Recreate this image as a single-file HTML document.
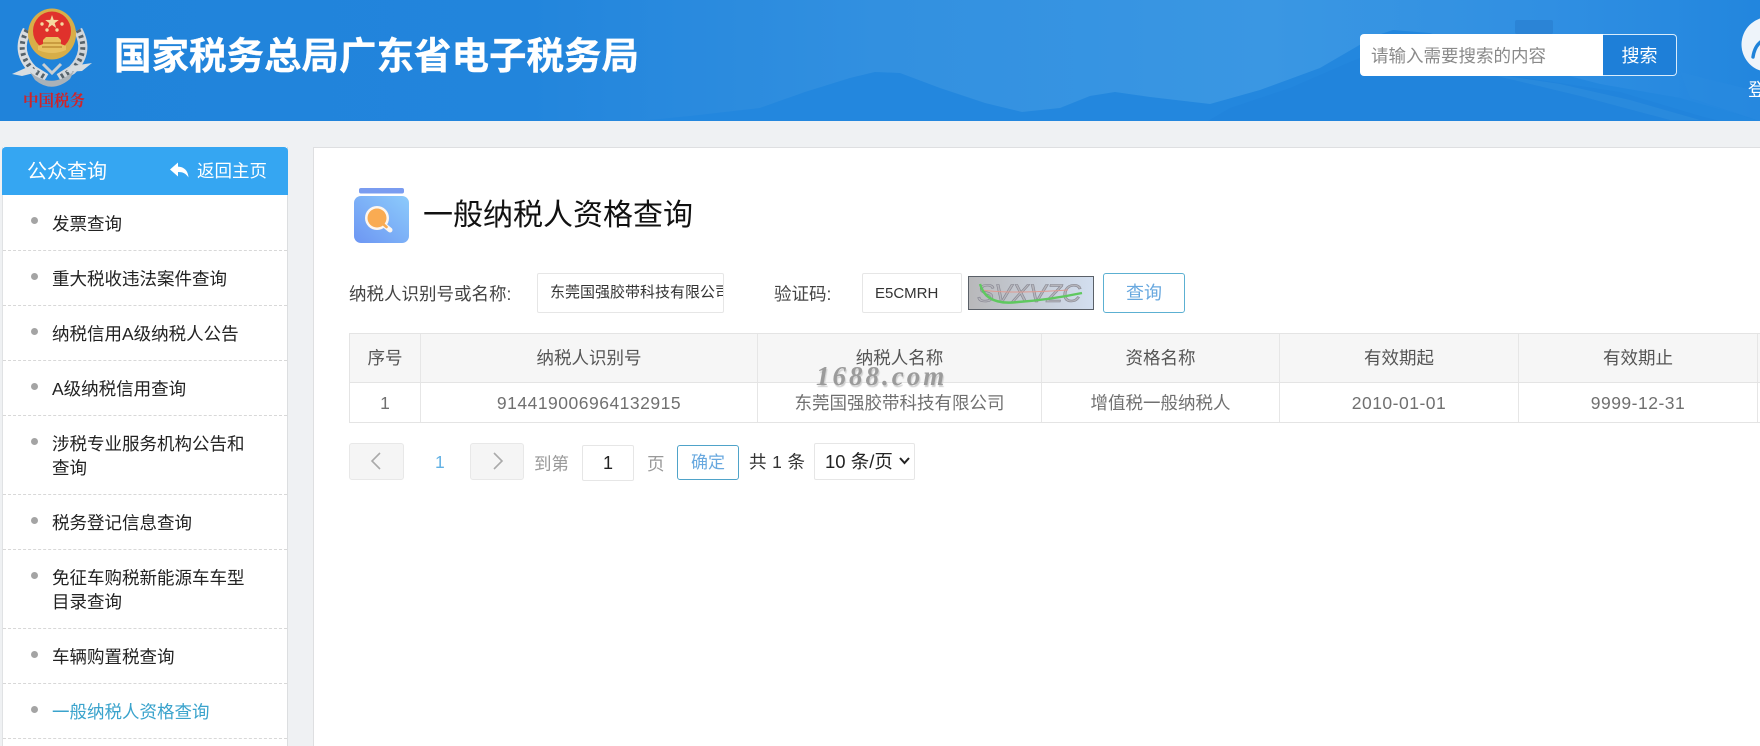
<!DOCTYPE html>
<html lang="zh">
<head>
<meta charset="utf-8">
<title>一般纳税人资格查询</title>
<style>
*{box-sizing:border-box;margin:0;padding:0}
html,body{width:1760px;height:746px;overflow:hidden;background:#eff1f3}
body{position:relative;font-family:"Liberation Sans","Noto Sans CJK SC",sans-serif;font-size:17.5px;color:#333}
.a{position:absolute;white-space:nowrap}
#hd{left:0;top:0;width:1760px;height:121px;overflow:hidden;background:#2083dc}
#title{left:114px;top:32px;font-size:37.5px;line-height:48px;font-weight:700;color:#fff;-webkit-text-stroke:.3px #fff}
#sb{left:2px;top:147px;width:286px;height:599px;background:#fff;border-left:1px solid #e0e2e4;border-right:1px solid #dcdee0}
#sbh{left:2px;top:147px;width:286px;height:48px;background:#35a6f2;border-radius:4px 4px 0 0;color:#fff}
.it{left:3px;width:284px;border-bottom:1px dashed #d8d8d8;padding:16px 30px 0 49px;line-height:24px;font-size:17.5px;color:#222;white-space:normal}
.it:before{content:"";position:absolute;left:28px;top:22px;width:7px;height:7px;border-radius:50%;background:#a4a4a4}
#main{left:313px;top:147px;width:1447px;height:599px;background:#fff;border-top:1px solid #dedfe1;border-left:1px solid #dedfe1}
.box{background:#fff;border:1px solid #e6e6e6;border-radius:2px}
.th,.td{position:absolute;text-align:center;white-space:nowrap;border-right:1px solid #e6e6e6}
.th{top:334px;height:48px;line-height:49px;background:#f6f6f6;color:#555}
.td{top:383px;height:39px;line-height:40px;color:#707070}
.num{letter-spacing:.5px}
.pg{background:#f5f5f5;border:1px solid #e8e8e8;border-radius:3px}
</style>
</head>
<body>
<div class="a" id="hd">
<svg width="1760" height="121" style="position:absolute;left:0;top:0" viewBox="0 0 1760 121">
<defs>
<linearGradient id="sky" x1="0" y1="0" x2="1" y2="0"><stop offset="0" stop-color="#2083da"/><stop offset=".3" stop-color="#2285dc"/><stop offset=".5" stop-color="#3290e0"/><stop offset=".72" stop-color="#3a97e3"/><stop offset=".88" stop-color="#308fe2"/><stop offset="1" stop-color="#2286de"/></linearGradient>
</defs>
<rect width="1760" height="121" fill="url(#sky)"/>
<path d="M640 121 L690 116 L760 108 L805 92 L850 78 L875 72 L900 73 L940 88 L985 103 L1022 112 L1060 108 L1090 96 L1115 92 L1150 97 L1210 104 L1260 90 L1320 68 L1375 36 L1393 30 L1430 33 L1500 58 L1600 84 L1680 98 L1760 121 Z" fill="#2387de"/>
<path d="M1208 121 L1230 108 L1290 88 L1350 62 L1400 42 L1500 74 L1620 92 L1700 116 L1720 121 Z" fill="#2184dc"/>
<path d="M1480 72 L1560 84 L1630 100 L1700 120 L1670 120 L1580 96 Z" fill="#4a9fe4" opacity=".22"/>
<path d="M1680 72 L1760 92 L1760 121 L1690 98 Z" fill="#2a8ae0" opacity=".6"/>
<rect x="1515" y="20" width="38" height="14" rx="2" fill="#2b84d6"/>
<!-- emblem -->
<path d="M27 30 Q15 52 33 70 L46 78" fill="none" stroke="#d9dde0" stroke-width="9"/>
<path d="M78 30 Q90 52 72 70 L59 78" fill="none" stroke="#d2d6da" stroke-width="9"/>
<path d="M27 30 Q15 52 33 70 L46 78" fill="none" stroke="#56636b" stroke-width="5" stroke-dasharray="2.6 3.4"/>
<path d="M78 30 Q90 52 72 70 L59 78" fill="none" stroke="#56636b" stroke-width="5" stroke-dasharray="2.6 3.4"/>
<ellipse cx="52" cy="34" rx="24" ry="25.5" fill="#d8ae48"/>
<ellipse cx="52" cy="31" rx="19" ry="19.5" fill="#e0312c"/>
<path d="M52 15l1.7 4.9 5.1.1-4.1 3.1 1.5 4.9-4.2-3-4.2 3 1.5-4.9-4.1-3.1 5.1-.1z" fill="#f5d9a0"/>
<circle cx="42" cy="24" r="1.7" fill="#f5d9a0"/><circle cx="62" cy="24" r="1.7" fill="#f5d9a0"/><circle cx="47" cy="30" r="1.7" fill="#f5d9a0"/><circle cx="57" cy="30" r="1.7" fill="#f5d9a0"/>
<path d="M38 50 L38 46 L43 44 L43 40 L46 37 L58 37 L61 40 L61 44 L66 46 L66 50 Q52 56 38 50Z" fill="#e8c160"/>
<path d="M43 43h18M42 47h20" stroke="#b8862c" stroke-width="1.2"/>
<path d="M12 74 L30 66 L38 72 L22 76Z" fill="#d8dde0"/>
<path d="M92 63 L72 66 L66 72 L82 71Z" fill="#d8dde0"/>
<path d="M30 72 Q52 90 74 71 L70 79 Q52 94 35 80Z" fill="#aab2b8"/>
<path d="M43 64 L52 73 L61 64" fill="none" stroke="#c9ced2" stroke-width="3"/>
<text x="23" y="106" font-family="'Noto Serif CJK SC',serif" font-size="16" font-weight="700" fill="#cf2429" textLength="62" lengthAdjust="spacingAndGlyphs">中国税务</text>
</svg>
<div class="a" id="title">国家税务总局广东省电子税务局</div>
<div class="a" style="left:1360px;top:34px;width:243px;height:42px;background:#fff;border-radius:4px 0 0 4px;color:#8a8a8a;line-height:45px;padding-left:11px;font-size:17.5px">请输入需要搜索的内容</div>
<div class="a" style="left:1603px;top:34px;width:74px;height:42px;background:#1e7fd8;border:1px solid #d9ecfb;border-left:0;border-radius:0 4px 4px 0;color:#fff;line-height:42px;text-align:center;font-size:18px">搜索</div>
<svg class="a" style="left:1741px;top:17px" width="19" height="55" viewBox="0 0 19 55"><circle cx="28" cy="27.5" r="27.5" fill="#eef4fa"/><path d="M12 40 Q14 26 25 22" fill="none" stroke="#2083d9" stroke-width="3.4" stroke-linecap="round"/><circle cx="26" cy="13" r="5" fill="#c6dcf0"/></svg>
<div class="a" style="left:1748px;top:79px;font-size:18px;line-height:22px;color:#fff">登录</div>
</div>

<div class="a" id="sb"></div>
<div class="a" id="sbh">
<span class="a" style="left:25px;top:12px;font-size:20px;line-height:26px">公众查询</span>
<svg class="a" style="left:168px;top:15px" width="19" height="17" viewBox="0 0 19 17"><path d="M0 7.5 L8 0.5 V4.6 C14 4.8 18 8.5 18.5 15.5 C16 11.5 13 10 8 10 V14.5 Z" fill="#fff"/></svg>
<span class="a" style="left:195px;top:12px;font-size:17.5px;line-height:24px">返回主页</span>
</div>
<div class="a it" style="top:195px;height:56px;padding-top:17px">发票查询</div>
<div class="a it" style="top:251px;height:55px">重大税收违法案件查询</div>
<div class="a it" style="top:306px;height:55px">纳税信用A级纳税人公告</div>
<div class="a it" style="top:361px;height:55px">A级纳税信用查询</div>
<div class="a it" style="top:416px;height:79px">涉税专业服务机构公告和查询</div>
<div class="a it" style="top:495px;height:55px">税务登记信息查询</div>
<div class="a it" style="top:550px;height:79px">免征车购税新能源车车型目录查询</div>
<div class="a it" style="top:629px;height:55px">车辆购置税查询</div>
<div class="a it" style="top:684px;height:55px;color:#3aa3cc">一般纳税人资格查询</div>

<div class="a" id="main"></div>
<svg class="a" style="left:352px;top:186px" width="58" height="60" viewBox="0 0 58 60">
<defs><linearGradient id="jar" x1="0" y1="1" x2="1" y2="0"><stop offset="0" stop-color="#6d96f3"/><stop offset="1" stop-color="#8ccbfb"/></linearGradient></defs>
<rect x="7" y="2" width="45" height="5.5" rx="2" fill="#7a9cf0"/>
<rect x="2" y="10" width="55" height="47" rx="7" fill="url(#jar)"/>
<circle cx="25" cy="32" r="12" fill="#fdf6ef"/>
<path d="M32 39 L38 44" stroke="#fdf6ef" stroke-width="5" stroke-linecap="round"/>
<circle cx="25" cy="32" r="9.5" fill="#f9ab52"/>
<path d="M31 38 L34.5 41" stroke="#f9ab52" stroke-width="2.6" stroke-linecap="round"/>
</svg>
<div class="a" style="left:423px;top:196px;font-size:30px;line-height:40px;color:#111">一般纳税人资格查询</div>

<div class="a" style="left:349px;top:282px;line-height:24px;color:#444;font-size:17.5px">纳税人识别号或名称:</div>
<div class="a box" style="left:537px;top:273px;width:187px;height:40px;overflow:hidden;font-size:15px;line-height:38px;color:#333;padding-left:12px">东莞国强胶带科技有限公司</div>
<div class="a" style="left:774px;top:282px;line-height:24px;color:#444;font-size:17.5px">验证码:</div>
<div class="a box" style="left:862px;top:273px;width:100px;height:40px;font-size:15px;line-height:40px;color:#333;padding-left:12px">E5CMRH</div>
<svg class="a" style="left:968px;top:276px" width="126" height="34" viewBox="0 0 126 34">
<defs><linearGradient id="cp" x1="0" y1="0" x2="1" y2="0"><stop offset="0" stop-color="#b8b8ba"/><stop offset="1" stop-color="#d3dff0"/></linearGradient></defs>
<rect x=".5" y=".5" width="125" height="33" fill="url(#cp)" stroke="#5a6068"/>
<text x="9" y="26" font-family="'Liberation Sans',sans-serif" font-size="25" font-style="italic" fill="#b5b5bb" stroke="#858590" stroke-width=".6" textLength="104" lengthAdjust="spacingAndGlyphs">SVXVZC</text>
<path d="M14 14 Q40 18 100 14" fill="none" stroke="#e09a90" stroke-width="1"/>
<path d="M12 8 Q18 30 50 26 Q80 24 114 17" fill="none" stroke="#5fc85f" stroke-width="2.4"/>
</svg>
<div class="a" style="left:1103px;top:273px;width:82px;height:40px;border:1px solid #5cb0d2;border-radius:3px;background:#fff;color:#68a8df;font-size:18px;line-height:39px;text-align:center">查询</div>

<div class="a" style="left:349px;top:333px;width:1411px;height:90px;border:1px solid #e4e4e4;border-right:0"></div>
<div class="th" style="left:350px;width:71px">序号</div>
<div class="th" style="left:421px;width:337px">纳税人识别号</div>
<div class="th" style="left:758px;width:284px">纳税人名称</div>
<div class="th" style="left:1042px;width:238px">资格名称</div>
<div class="th" style="left:1280px;width:239px">有效期起</div>
<div class="th" style="left:1519px;width:239px">有效期止</div>
<div class="th" style="left:1758px;width:2px;border-right:0"></div>
<div class="a" style="left:350px;top:382px;width:1410px;height:1px;background:#e4e4e4"></div>
<div class="td" style="left:350px;width:71px">1</div>
<div class="td num" style="left:421px;width:337px">914419006964132915</div>
<div class="td" style="left:758px;width:284px">东莞国强胶带科技有限公司</div>
<div class="td" style="left:1042px;width:238px">增值税一般纳税人</div>
<div class="td num" style="left:1280px;width:239px">2010-01-01</div>
<div class="td num" style="left:1519px;width:239px">9999-12-31</div>
<div class="a" style="left:816px;top:361px;font-family:'Liberation Serif',serif;font-style:italic;font-weight:700;font-size:27px;line-height:30px;letter-spacing:3px;color:#9b9b9b;text-shadow:1px 2px 1px #cfcfcf">1688.com</div>

<div class="a pg" style="left:349px;top:443px;width:55px;height:37px"></div>
<svg class="a" style="left:369px;top:452px" width="14" height="18" viewBox="0 0 14 18"><path d="M11 1 L3 9 L11 17" fill="none" stroke="#aaa" stroke-width="1.6"/></svg>
<div class="a" style="left:435px;top:450px;line-height:24px;color:#62b1e4">1</div>
<div class="a pg" style="left:470px;top:443px;width:54px;height:37px"></div>
<svg class="a" style="left:491px;top:452px" width="14" height="18" viewBox="0 0 14 18"><path d="M3 1 L11 9 L3 17" fill="none" stroke="#aaa" stroke-width="1.6"/></svg>
<div class="a" style="left:534px;top:452px;line-height:24px;color:#999">到第</div>
<div class="a box" style="left:582px;top:445px;width:52px;height:36px;line-height:34px;text-align:center;color:#222;font-size:18px">1</div>
<div class="a" style="left:647px;top:452px;line-height:24px;color:#999">页</div>
<div class="a" style="left:677px;top:445px;width:62px;height:35px;border:1px solid #4fa3c9;border-radius:3px;color:#68a8df;line-height:33px;text-align:center;font-size:17px">确定</div>
<div class="a" style="left:749px;top:450px;line-height:24px;color:#333;letter-spacing:.4px">共 1 条</div>
<div class="a box" style="left:814px;top:443px;width:101px;height:37px;line-height:35px;padding-left:10px;color:#222;font-size:18.5px">10 条/页</div>
<svg class="a" style="left:899px;top:456px" width="11" height="9" viewBox="0 0 11 9"><path d="M1 2 L5.5 7 L10 2" fill="none" stroke="#222" stroke-width="2"/></svg>
</body>
</html>
